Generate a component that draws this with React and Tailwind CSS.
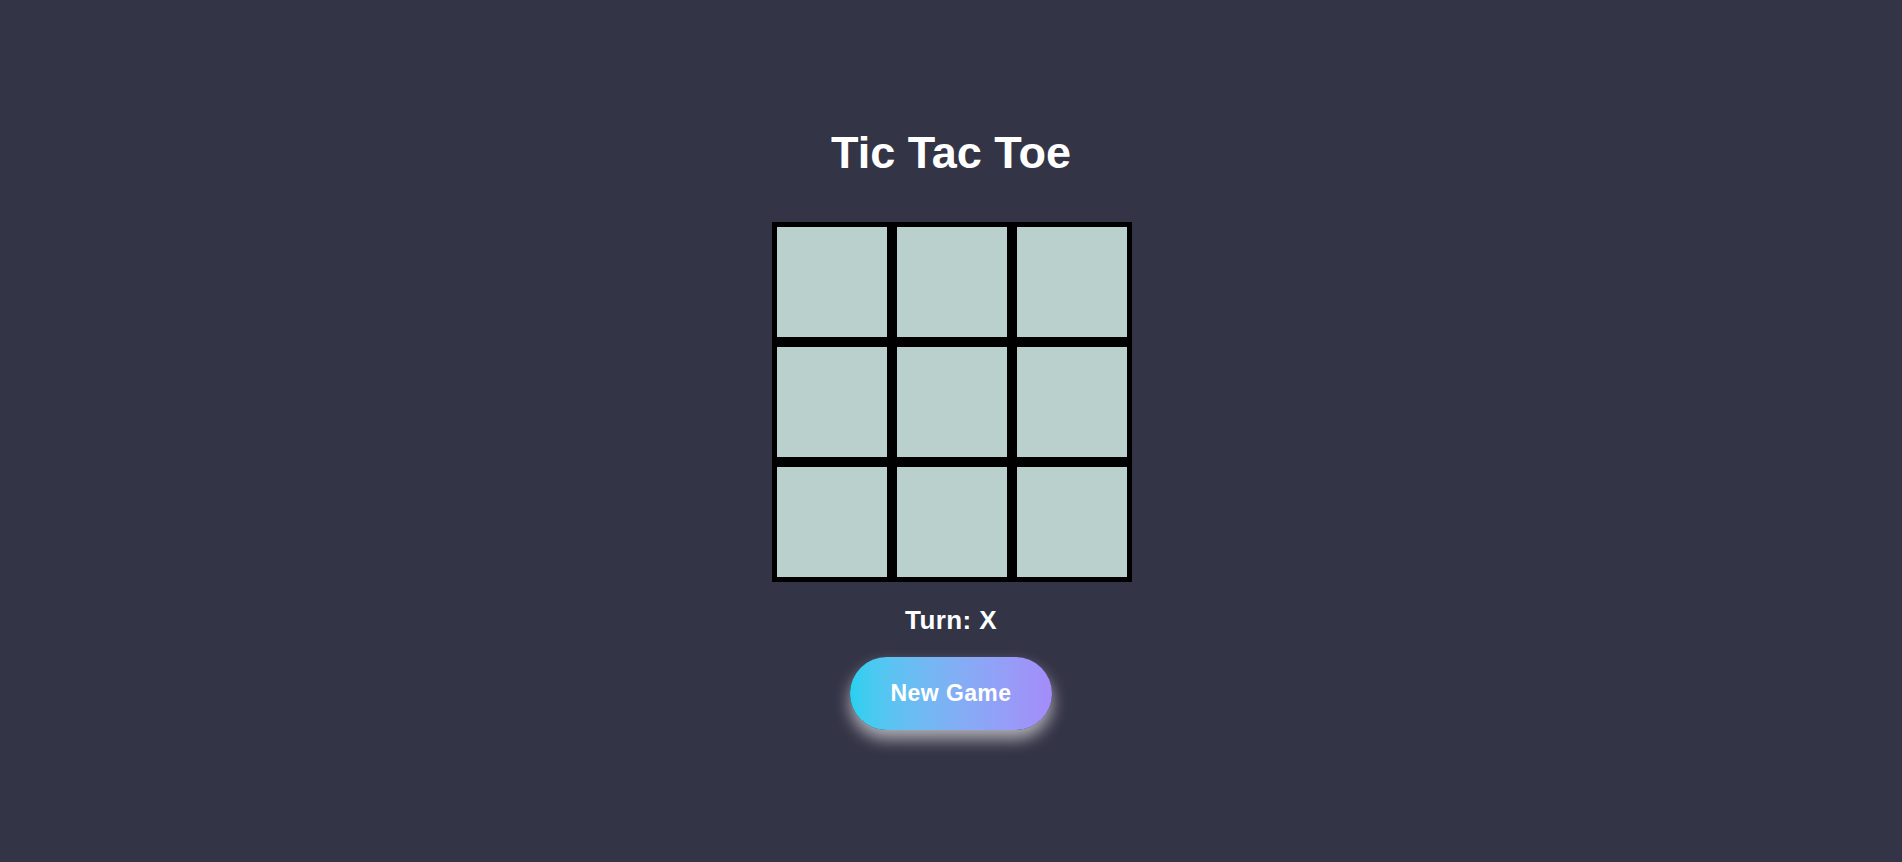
import React, { useState } from 'react';

const lines = [
  [0, 1, 2], [3, 4, 5], [6, 7, 8],
  [0, 3, 6], [1, 4, 7], [2, 5, 8],
  [0, 4, 8], [2, 4, 6],
];

const winnerOf = (cells) => {
  for (const [a, b, c] of lines) {
    if (cells[a] && cells[a] === cells[b] && cells[a] === cells[c]) return cells[a];
  }
  return null;
};

const App = () => {
  const [cells, setCells] = useState(Array(9).fill(null));
  const [turn, setTurn] = useState('X');

  const winner = winnerOf(cells);
  const full = cells.every(Boolean);

  const play = (i) => {
    if (cells[i] || winner) return;
    const next = [...cells];
    next[i] = turn;
    setCells(next);
    setTurn(turn === 'X' ? 'O' : 'X');
  };

  const reset = () => {
    setCells(Array(9).fill(null));
    setTurn('X');
  };

  let status = `Turn: ${turn}`;
  if (winner) status = `Winner: ${winner}`;
  else if (full) status = 'Draw';

  return (
    <div className="min-h-screen bg-[#343447] flex flex-col items-center pt-[128px] font-['Liberation_Sans',Arial,sans-serif] text-white">
      <h1 className="text-[45px] leading-[50px] font-bold">Tic Tac Toe</h1>

      {/* Board */}
      <div className="mt-[44px] ml-[2px] grid grid-cols-3 gap-[10px] bg-black p-[5px]">
        {cells.map((v, i) => (
          <button
            key={i}
            onClick={() => play(i)}
            className="w-[110px] h-[110px] bg-[#b9d0cd] text-[#343447] text-[64px] font-bold flex items-center justify-center"
          >
            {v}
          </button>
        ))}
      </div>

      <p className="mt-[23px] text-[26px] leading-[30px] font-bold tracking-[0.4px]">{status}</p>

      <button
        onClick={reset}
        className="mt-[22px] w-[202px] h-[73px] rounded-full bg-gradient-to-r from-[#27d0ef] to-[#a48cf9] text-[23px] font-bold tracking-[0.4px] text-white shadow-[0_9px_16px_rgba(255,255,255,0.6)]"
      >
        New Game
      </button>
    </div>
  );
};

export default App;
